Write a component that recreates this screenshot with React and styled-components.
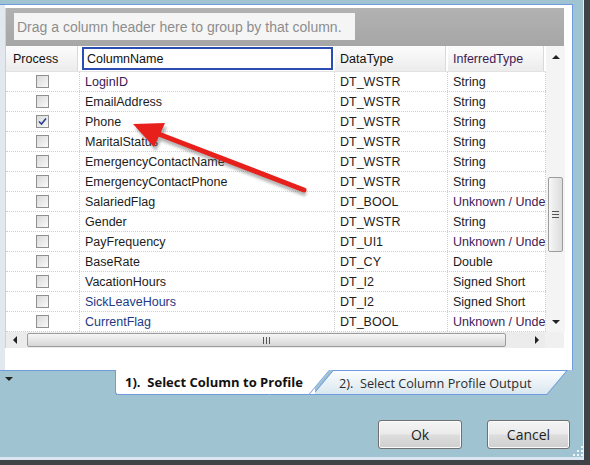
import React from 'react';
import styled, { createGlobalStyle } from 'styled-components';

const GlobalStyle = createGlobalStyle`
  *, *::before, *::after { box-sizing: border-box; }
  html, body { margin: 0; padding: 0; }
  body {
    width: 590px;
    height: 465px;
    overflow: hidden;
    font-family: "Liberation Sans", Arial, sans-serif;
  }
`;

const BLUE_LINE = '#6e9be0';

const Window = styled.div`
  position: relative;
  width: 590px;
  height: 465px;
  background: #3f4347;
  overflow: hidden;
`;

const Shell = styled.div`
  width: 584px;
  height: 460px;
  padding-top: 4px;
  background: #9fc3d1;
  border-right: 1px solid #e4eef3;
  border-bottom: 3px solid #dce6f0;
  display: flex;
  flex-direction: column;
`;

const Panel = styled.div`
  width: 573px;
  height: 366px;
  padding: 3px 8px 0 5px;
  background: linear-gradient(to right, #e3e8ee 0 5px, #fff 5px);
  border-top: 1px solid ${BLUE_LINE};
  border-right: 1px solid ${BLUE_LINE};
`;

const Grid = styled.div`
  width: 559px;
  display: flex;
  flex-direction: column;
  background: #fff;
  border-left: 1px solid #c9d1db;
`;

const GroupBar = styled.div`
  height: 38px;
  padding: 5px 0 0 8px;
  background: linear-gradient(#b2b2b2, #a6a6a6);
`;

const GroupHint = styled.div`
  width: 341px;
  height: 27px;
  padding-left: 3px;
  display: flex;
  align-items: center;
  background: #f5f5f5;
  color: #8d8d8d;
  font-size: 14px;
  white-space: nowrap;
`;

const Body = styled.div`
  display: flex;
`;

const Table = styled.div`
  width: 540px;
  display: flex;
  flex-direction: column;
`;

const COLS = '74px 255px 113px 98px';

const HeaderRow = styled.div`
  display: grid;
  grid-template-columns: ${COLS};
  height: 26px;
  border-bottom: 1px solid #e2e2e2;
`;

const HeaderCell = styled.div`
  display: flex;
  align-items: center;
  padding-left: ${(p) => (p.$pad ? p.$pad : 5)}px;
  font-size: 12.5px;
  color: ${(p) => p.$color || '#111'};
  background: ${(p) =>
    p.$active ? '#fff' : 'linear-gradient(#fcfcfc, #ececec)'};
  border: ${(p) => (p.$active ? '2px solid #2b4cb3' : 'none')};
  border-right: ${(p) => (p.$active ? '2px solid #2b4cb3' : '2px solid #fff')};
  margin: ${(p) => (p.$active ? '1px 2px 1px 2px' : '0')};
  box-shadow: ${(p) => (p.$active ? 'none' : 'inset -1px 0 0 #dadada')};
  white-space: nowrap;
  overflow: hidden;
`;

const Row = styled.div`
  display: grid;
  grid-template-columns: ${COLS};
  height: 20px;
  border-bottom: 1px dotted #cfcfcf;
`;

const Cell = styled.div`
  display: flex;
  align-items: center;
  justify-content: ${(p) => (p.$center ? 'center' : 'flex-start')};
  padding-left: ${(p) => (p.$center ? 0 : 5)}px;
  font-size: 12.5px;
  color: ${(p) => p.$color || '#1c1c1c'};
  border-right: 1px dotted #cfcfcf;
  white-space: nowrap;
  overflow: hidden;
  text-overflow: clip;
`;

const Box = styled.div`
  width: 13px;
  height: 13px;
  border: 1px solid #8f9090;
  background: linear-gradient(135deg, #d9d9d9, #f9f9f9);
  display: flex;
  align-items: center;
  justify-content: center;
`;

const VScroll = styled.div`
  width: 19px;
  display: flex;
  flex-direction: column;
  background: #f4f4f4;
`;

const ScrollBtn = styled.div`
  flex: 0 0 auto;
  width: ${(p) => p.$w || 19}px;
  height: ${(p) => p.$h || 21}px;
  display: flex;
  align-items: center;
  justify-content: center;
`;

const Triangle = styled.span`
  width: 0;
  height: 0;
  border-style: solid;
  ${(p) =>
    p.$dir === 'up'
      ? 'border-width: 0 4px 4px 4px; border-color: transparent transparent #222 transparent;'
      : p.$dir === 'down'
      ? 'border-width: 4px 4px 0 4px; border-color: #222 transparent transparent transparent;'
      : p.$dir === 'left'
      ? 'border-width: 4px 4px 4px 0; border-color: transparent #222 transparent transparent;'
      : 'border-width: 4px 0 4px 4px; border-color: transparent transparent transparent #222;'}
`;

const VTrack = styled.div`
  flex: 1;
  padding: 110px 2px 0 2px;
`;

const VThumb = styled.div`
  height: 75px;
  border: 1px solid #9c9c9c;
  border-radius: 2px;
  background: linear-gradient(to right, #f7f7f7, #dcdcdc);
  display: flex;
  flex-direction: column;
  align-items: center;
  justify-content: center;
  gap: 2px;
`;

const GripLineH = styled.span`
  width: 7px;
  height: 1px;
  background: #555;
`;

const HScrollRow = styled.div`
  display: flex;
  height: 16px;
  background: #ececec;
`;

const HTrack = styled.div`
  flex: 1;
  padding: 1px 0 1px 4px;
`;

const HThumb = styled.div`
  width: 479px;
  height: 100%;
  border: 1px solid #9c9c9c;
  border-radius: 2px;
  background: linear-gradient(#f6f6f6, #d6d6d6);
  display: flex;
  align-items: center;
  justify-content: center;
  gap: 2px;
`;

const GripLineV = styled.span`
  width: 1px;
  height: 7px;
  background: #555;
`;

const Corner = styled.div`
  width: 19px;
  background: #f0f0f0;
`;

const TabStrip = styled.div`
  display: flex;
  height: 25px;
`;

const LeftStub = styled.div`
  width: 115px;
  padding: 10px 0 0 5px;
  border-top: 1px solid ${BLUE_LINE};
`;

const ActiveTab = styled.div`
  position: relative;
  z-index: 2;
  width: 200px;
  padding-left: 9px;
  display: flex;
  align-items: center;
  background: #fff;
  border-left: 1px solid ${BLUE_LINE};
  border-bottom: 1px solid ${BLUE_LINE};
  border-bottom-left-radius: 3px;
  font-family: "Open Sans", "Noto Sans", sans-serif;
  font-weight: 700;
  font-size: 13px;
  color: #111;
  white-space: nowrap;

  &::after {
    content: '';
    position: absolute;
    z-index: -1;
    top: 0;
    bottom: -1px;
    right: -15px;
    width: 40px;
    background: #fff;
    border-right: 1px solid ${BLUE_LINE};
    border-bottom: 1px solid ${BLUE_LINE};
    transform: skewX(-40deg);
    transform-origin: top right;
  }
`;

const OtherTab = styled.div`
  position: relative;
  z-index: 1;
  width: 235px;
  margin-left: 18px;
  padding-left: 6px;
  display: flex;
  align-items: center;
  font-family: "Open Sans", "Noto Sans", sans-serif;
  font-size: 12.7px;
  color: #2b2b2b;
  white-space: nowrap;

  &::before {
    content: '';
    position: absolute;
    z-index: -1;
    inset: 0;
    background: linear-gradient(#fbfdfe, #d9e7ef);
    border: 1px solid ${BLUE_LINE};
    transform: skewX(-40deg);
    transform-origin: top left;
  }
`;

const Footer = styled.div`
  display: flex;
  justify-content: flex-end;
  gap: 25px;
  padding: 25px 13px 0 0;
`;

const Button = styled.button`
  width: ${(p) => p.$w}px;
  height: 29px;
  padding: 0;
  border: 1px solid #707070;
  border-radius: 3px;
  background: linear-gradient(#f4f4f4 0%, #ebebeb 48%, #dddddd 52%, #cfcfcf 100%);
  box-shadow: inset 0 0 0 1px #fbfbfb;
  font-family: "Open Sans", "Noto Sans", sans-serif;
  font-size: 14px;
  color: #1e1e1e;
`;

const Grip = styled.svg`
  position: absolute;
  right: 7px;
  bottom: 9px;
`;

const Overlay = styled.svg`
  position: absolute;
  left: 0;
  top: 0;
  pointer-events: none;
`;

const rows = [
  ['LoginID', 'DT_WSTR', 'String', false, '#3d1656'],
  ['EmailAddress', 'DT_WSTR', 'String'],
  ['Phone', 'DT_WSTR', 'String', true],
  ['MaritalStatus', 'DT_WSTR', 'String'],
  ['EmergencyContactName', 'DT_WSTR', 'String'],
  ['EmergencyContactPhone', 'DT_WSTR', 'String'],
  ['SalariedFlag', 'DT_BOOL', 'Unknown / Undefined'],
  ['Gender', 'DT_WSTR', 'String'],
  ['PayFrequency', 'DT_UI1', 'Unknown / Undefined'],
  ['BaseRate', 'DT_CY', 'Double'],
  ['VacationHours', 'DT_I2', 'Signed Short'],
  ['SickLeaveHours', 'DT_I2', 'Signed Short', false, '#1d3a86'],
  ['CurrentFlag', 'DT_BOOL', 'Unknown / Undefined', false, '#1d3a86'],
];

const Check = () => (
  <svg width="9" height="9" viewBox="0 0 9 9">
    <path d="M1 4.5 L3.5 7 L8 1.5" fill="none" stroke="#2a3f8f" strokeWidth="1.6" />
  </svg>
);

export default function App() {
  return (
    <Window>
      <GlobalStyle />
      <Shell>
        <Panel>
          <Grid>
            <GroupBar>
              <GroupHint>Drag a column header here to group by that column.</GroupHint>
            </GroupBar>
            <Body>
              <Table>
                <HeaderRow>
                  <HeaderCell $pad={7}>Process</HeaderCell>
                  <HeaderCell $active $pad={3}>ColumnName</HeaderCell>
                  <HeaderCell>DataType</HeaderCell>
                  <HeaderCell $color="#3b1a58">InferredType</HeaderCell>
                </HeaderRow>
                {rows.map(([name, type, inferred, checked, color]) => (
                  <Row key={name}>
                    <Cell $center>
                      <Box>{checked && <Check />}</Box>
                    </Cell>
                    <Cell $color={color}>{name}</Cell>
                    <Cell>{type}</Cell>
                    <Cell $color={inferred.startsWith('Unknown') ? '#3f1a5c' : undefined}>
                      {inferred}
                    </Cell>
                  </Row>
                ))}
              </Table>
              <VScroll>
                <ScrollBtn>
                  <Triangle $dir="up" />
                </ScrollBtn>
                <VTrack>
                  <VThumb>
                    <GripLineH />
                    <GripLineH />
                    <GripLineH />
                  </VThumb>
                </VTrack>
                <ScrollBtn>
                  <Triangle $dir="down" />
                </ScrollBtn>
              </VScroll>
            </Body>
            <HScrollRow>
              <ScrollBtn $w={17} $h={16}>
                <Triangle $dir="left" />
              </ScrollBtn>
              <HTrack>
                <HThumb>
                  <GripLineV />
                  <GripLineV />
                  <GripLineV />
                </HThumb>
              </HTrack>
              <ScrollBtn $w={17} $h={16}>
                <Triangle $dir="right" />
              </ScrollBtn>
              <Corner />
            </HScrollRow>
          </Grid>
        </Panel>
        <TabStrip>
          <LeftStub>
            <Triangle $dir="down" />
          </LeftStub>
          <ActiveTab>1).&nbsp; Select Column to Profile</ActiveTab>
          <OtherTab>2).&nbsp; Select Column Profile Output</OtherTab>
        </TabStrip>
        <Footer>
          <Button $w={84}>Ok</Button>
          <Button $w={83}>Cancel</Button>
        </Footer>
      </Shell>
      <Grip width="11" height="11" viewBox="0 0 11 11">
        {[[9, 1], [9, 5], [5, 5], [9, 9], [5, 9], [1, 9]].map(([x, y]) => (
          <rect key={`${x}-${y}`} x={x} y={y} width="2" height="2" fill="#f2f6f8" />
        ))}
      </Grip>
      <Overlay width="590" height="465" viewBox="0 0 590 465">
        <defs>
          <filter id="blur" x="-10%" y="-10%" width="120%" height="120%">
            <feGaussianBlur stdDeviation="1.5" />
          </filter>
        </defs>
        <g transform="translate(2 4)" filter="url(#blur)" opacity="0.45">
          <line x1="304" y1="190" x2="156" y2="133" stroke="#555" strokeWidth="5" />
          <polygon points="133,124 165,123 154,147" fill="#555" />
        </g>
        <line x1="304" y1="190" x2="156" y2="133" stroke="#e8201b" strokeWidth="5" strokeLinecap="round" />
        <polygon points="133,124 165,123 154,147" fill="#e8201b" />
      </Overlay>
    </Window>
  );
}
